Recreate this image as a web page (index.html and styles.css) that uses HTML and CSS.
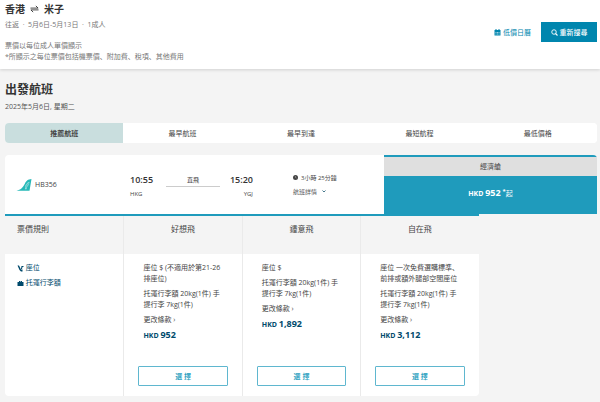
FILE: index.html
```html
<!DOCTYPE html>
<html lang="zh">
<head>
  <meta charset="UTF-8" />
  <meta name="viewport" content="width=device-width, initial-scale=1.0"/>
  <title>出發航班</title>
  <link rel="stylesheet" href="styles.css">
</head>
<body>

  <header class="search-bar">
    <div class="search-info">
      <h1 class="route">
        香港
        <svg class="route-icon" viewBox="0 0 20 16" aria-hidden="true"><path d="M1 6h17l-5-5M19 10H2l5 5" fill="none" stroke="currentColor" stroke-width="2"/></svg>
        米子
      </h1>
      <p class="trip">往返 &nbsp;·&nbsp; 5月6日-5月13日 &nbsp;·&nbsp; 1成人</p>
      <p class="note">票價以每位成人單價顯示</p>
      <p class="note">*所顯示之每位票價包括機票價、附加費、稅項、其他費用</p>
    </div>
    <div class="search-actions">
      <a class="calendar-link" href="#">
        <svg class="icon" viewBox="0 0 14 14" aria-hidden="true"><path d="M1 2h2V0h2v2h4V0h2v2h2v11H1z" fill="currentColor"/><path d="M3 6h2v2H3zM6 6h2v2H6zM9 6h2v2H9zM3 9h2v2H3zM6 9h2v2H6zM9 9h2v2H9z" fill="#9fd0e2"/></svg>
        低價日曆
      </a>
      <button class="search-btn" type="button">
        <svg class="icon" viewBox="0 0 14 14" aria-hidden="true"><circle cx="6" cy="6" r="4.5" fill="none" stroke="currentColor" stroke-width="1.8"/><path d="M9 9l4 4" stroke="currentColor" stroke-width="2.2"/></svg>
        重新搜尋
      </button>
    </div>
  </header>

  <main>
    <h2>出發航班</h2>
    <p class="date">2025年5月6日, 星期二</p>

    <nav class="tabs">
      <button class="tab active" type="button">推薦航班</button>
      <button class="tab" type="button">最早航班</button>
      <button class="tab" type="button">最早到達</button>
      <button class="tab" type="button">最短航程</button>
      <button class="tab" type="button">最低價格</button>
    </nav>

    <section class="flight">
      <div class="flight-info">
        <div class="flight-no">
          <svg class="tail" viewBox="0 0 45 36" aria-hidden="true">
            <path d="M0 35C13 32 18 27 25 14C30 5 34 1 45 0L39 35Z" fill="#27b9b8"/>
            <path d="M25 31l2-12 6-8 6-3-2 9-5 6-2 8z" fill="#a9e3e1"/>
            <path d="M28 28l2-9 5-6M33 20l3-7" fill="none" stroke="#27b9b8" stroke-width="2"/>
          </svg>
          HB356
        </div>
        <div class="times">
          <div><b class="time">10:55</b><span class="airport">HKG</span></div>
          <span class="direct">直飛</span>
          <div class="arrive"><b class="time">15:20</b><span class="airport">YGJ</span></div>
        </div>
        <div class="duration">
          <span><svg class="clock" viewBox="0 0 10 10" aria-hidden="true"><circle cx="5" cy="5" r="5" fill="#444"/><path d="M5 2v3l2 1" fill="none" stroke="#bbb"/></svg>3小時 25分鐘</span>
          <a class="details" href="#">航班詳情 <svg class="caret" viewBox="0 0 8 6" aria-hidden="true"><path d="M1 1l3 3 3-3" fill="none" stroke="#47798c" stroke-width="2"/></svg></a>
        </div>
      </div>
      <div class="cabin">
        <div class="cabin-name">經濟艙</div>
        <button class="cabin-price" type="button">HKD <b class="amount">952</b> <sup>*</sup><span class="from">起</span></button>
      </div>
    </section>

    <table class="fares">
      <thead>
        <tr>
          <th class="rules">票價規則</th>
          <th>好想飛</th>
          <th>鍾意飛</th>
          <th>自在飛</th>
        </tr>
      </thead>
      <tbody>
        <tr>
          <td class="legend" rowspan="2">
            <p><svg class="icon" viewBox="0 0 14 14" aria-hidden="true"><path d="M1 1h3l4 8h3v4H8L5 10zM9 2h4v2h-2l-1 4H8z" fill="currentColor"/></svg> 座位</p>
            <p><svg class="icon" viewBox="0 0 14 14" aria-hidden="true"><path d="M4 4V2h6v2h3v8H1V4zM6 4h2V3H6z" fill="currentColor"/></svg> 托運行李額</p>
          </td>
          <td class="fare">
            <p>座位 $ (不適用於第21-26排座位)</p>
            <p>托運行李額 20kg(1件) 手提行李 7kg(1件)</p>
            <p><a href="#">更改條款 ›</a></p>
            <p class="price">HKD <b class="amount">952</b></p>
          </td>
          <td class="fare">
            <p>座位 $</p>
            <p>托運行李額 20kg(1件) 手提行李 7kg(1件)</p>
            <p><a href="#">更改條款 ›</a></p>
            <p class="price">HKD <b class="amount">1,892</b></p>
          </td>
          <td class="fare">
            <p>座位 一次免費選購標準、前排或額外腿部空間座位</p>
            <p>托運行李額 20kg(1件) 手提行李 7kg(1件)</p>
            <p><a href="#">更改條款 ›</a></p>
            <p class="price">HKD <b class="amount">3,112</b></p>
          </td>
        </tr>
        <tr>
          <td class="pick"><button class="select-btn" type="button">選 擇</button></td>
          <td class="pick"><button class="select-btn" type="button">選 擇</button></td>
          <td class="pick"><button class="select-btn" type="button">選 擇</button></td>
        </tr>
      </tbody>
    </table>
  </main>

</body>
</html>
```
FILE: styles.css
```css
* {
  box-sizing: border-box;
}
body {
  margin: 0;
  font-family: "Open Sans", "Noto Sans CJK SC", sans-serif;
  font-size: 7px;
  line-height: 11px;
  color: #444;
  background-color: #f4f4f4;
}
h1, h2, p {
  margin: 0;
}
a {
  color: inherit;
  text-decoration: none;
}
button {
  padding: 0;
  border: none;
  font: inherit;
  color: inherit;
  cursor: pointer;
}
.icon {
  width: 7px;
  height: 7px;
}

/* search summary */
.search-bar {
  display: flex;
  justify-content: space-between;
  align-items: flex-start;
  padding: 2px 3px 7px 5px;
  background-color: white;
  box-shadow: 0 1px 3px rgba(0, 0, 0, 0.15);
}
.route {
  display: flex;
  align-items: center;
  gap: 5px;
  font-size: 10px;
  line-height: 14px;
  color: #333;
}
.route-icon {
  width: 9px;
  height: 8px;
}
.trip {
  margin: 3px 0 10px;
  color: #777;
}
.note {
  color: #777;
}
.search-actions {
  display: flex;
  align-items: center;
  gap: 10px;
  padding-top: 20px;
}
.calendar-link, .search-btn {
  display: flex;
  align-items: center;
  justify-content: center;
  gap: 2px;
  color: #0086ae;
}
.search-btn {
  width: 56px;
  height: 20px;
  background-color: #0086ae;
  color: white;
  font-weight: 500;
}

main {
  padding: 12px 3px 6px 5px;
}
h2 {
  font-size: 12px;
  line-height: 18px;
  color: #333;
}
.date {
  margin-top: 2px;
  color: #555;
}

.tabs {
  display: flex;
  margin: 11px 0 12px;
  border-radius: 4px;
  background-color: white;
  overflow: hidden;
}
.tab {
  flex: 1;
  height: 20px;
  background-color: white;
}
.tab.active {
  background-color: #c9dede;
  font-weight: 700;
}

/* flight row */
.flight {
  display: flex;
  height: 59px;
}
.flight-info {
  flex: 16;
  display: grid;
  grid-template-columns: 33% 1fr 24%;
  align-items: center;
  border-radius: 4px 0 0 0;
  background-color: white;
}
.flight-no {
  display: flex;
  align-items: center;
  gap: 3px;
  padding-left: 11px;
}
.tail {
  width: 16px;
  height: 12px;
}
.times {
  display: flex;
  justify-content: space-between;
  margin-right: 40px;
  padding-top: 4px;
}
.time {
  display: block;
  margin-bottom: 3px;
  font-size: 9px;
  font-weight: 600;
  color: #333;
}
.airport {
  font-size: 6px;
}
.arrive {
  text-align: right;
}
.direct {
  flex: 1;
  height: 13px;
  margin: 0 10px 0 13px;
  border-bottom: 1px solid #ccc;
  font-size: 6px;
  line-height: 13px;
  text-align: center;
}
.duration {
  display: flex;
  flex-direction: column;
  gap: 3px;
  padding-top: 1px;
  font-size: 6px;
}
.clock {
  width: 5px;
  height: 5px;
  margin-right: 3px;
}
.details {
  color: #555;
}
.caret {
  width: 4px;
  height: 3px;
  margin: 0 0 1px 3px;
}
.cabin {
  flex: 9;
  display: flex;
  flex-direction: column;
  border-top: 2px solid #1f9bbc;
  border-radius: 0 4px 0 0;
}
.cabin-name {
  height: 19px;
  line-height: 20px;
  background-color: #dfdfdf;
  text-align: center;
}
.cabin-price {
  flex: 1;
  padding-bottom: 4px;
  background-color: #1f9bbc;
  color: white;
  font-weight: 700;
}
.cabin-price sup {
  line-height: 0;
}
.from {
  font-weight: 400;
}
.amount {
  font-size: 9px;
  font-weight: 700;
}

/* fare table */
.fares {
  width: 80%;
  table-layout: fixed;
  border-collapse: separate;
  border-spacing: 0;
  border-top: 2px solid #1f9bbc;
  border-radius: 0 0 4px 4px;
  background-color: white;
}
.fares th {
  height: 38px;
  padding: 7px 0 0;
  background-color: #f4f4f4;
  font-size: 8px;
  font-weight: 400;
  vertical-align: top;
}
.fares .rules {
  padding-left: 12px;
  text-align: left;
}
.fares th + th, .fare, .pick {
  border-left: 1px solid #eaeaea;
}
.fares td {
  vertical-align: top;
}
.legend {
  padding: 8px 12px;
  color: #004a6c;
}
.fare {
  height: 104px;
  padding: 8px 18px 0 19px;
}
.legend p, .fare p {
  margin-bottom: 4px;
}
.legend .icon {
  vertical-align: middle;
}
.fare .price {
  color: #004a6c;
  font-weight: 700;
}
.pick {
  padding: 8px 14px 10px;
}
.select-btn {
  display: block;
  width: 100%;
  height: 20px;
  border: 1px solid #5fb7cf;
  border-radius: 1px;
  background-color: white;
  color: #2b9fc0;
  font-weight: 700;
}
```
